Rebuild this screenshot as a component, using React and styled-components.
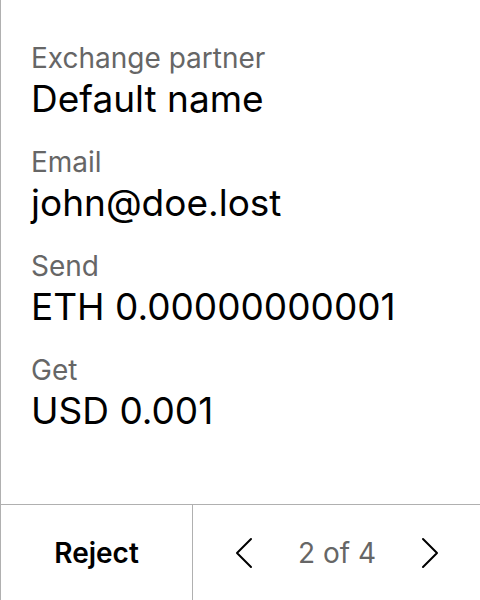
import React from "react";
import styled, { createGlobalStyle } from "styled-components";

const Global = createGlobalStyle`
  html, body { margin: 0; padding: 0; background: #fff; }
  body { font-family: Inter, "Noto Sans", sans-serif; }
  * { box-sizing: border-box; }
`;

const Screen = styled.div`
  width: 480px;
  height: 600px;
  display: flex;
  flex-direction: column;
  border-left: 1px solid #b0b0b0;
  background: #fff;
`;

const Details = styled.div`
  flex: 1;
  padding: 40px 30px 0 30px;
  display: flex;
  flex-direction: column;
  gap: 23px;
`;

const Field = styled.div`
  display: flex;
  flex-direction: column;
  gap: 1px;
`;

const Label = styled.div`
  font-size: 28px;
  line-height: 36px;
  color: #666;
`;

const Value = styled.div`
  font-size: 37px;
  line-height: 44px;
  color: #000;
`;

const Footer = styled.div`
  height: 96px;
  border-top: 1px solid #b0b0b0;
  display: grid;
  grid-template-columns: 192px 1fr;
`;

const RejectButton = styled.button`
  border: none;
  border-right: 1px solid #b0b0b0;
  background: none;
  font-family: inherit;
  font-size: 28px;
  font-weight: 600;
  color: #000;
  padding: 0;
`;

const Pager = styled.div`
  display: flex;
  align-items: center;
  justify-content: space-between;
  padding: 0 41px 0 42px;
`;

const Arrow = styled.button`
  border: none;
  background: none;
  padding: 0;
  width: 18px;
  height: 32px;
  display: flex;
  align-items: center;
  justify-content: center;
`;

const Count = styled.span`
  font-size: 28px;
  color: #666;
`;

const Chevron = ({ dir }) => (
  <svg width="18" height="32" viewBox="0 0 18 32">
    <path
      d={dir === "left" ? "M16 2 L2 16 L16 30" : "M2 2 L16 16 L2 30"}
      fill="none"
      stroke="#000"
      strokeWidth="2"
      strokeLinecap="round"
      strokeLinejoin="round"
    />
  </svg>
);

const fields = [
  ["Exchange partner", "Default name"],
  ["Email", "john@doe.lost"],
  ["Send", "ETH 0.00000000001"],
  ["Get", "USD 0.001"],
];

export default function App() {
  return (
    <>
      <Global />
      <Screen>
        <Details>
          {fields.map(([l, v]) => (
            <Field key={l}>
              <Label>{l}</Label>
              <Value>{v}</Value>
            </Field>
          ))}
        </Details>
        <Footer>
          <RejectButton>Reject</RejectButton>
          <Pager>
            <Arrow><Chevron dir="left" /></Arrow>
            <Count>2 of 4</Count>
            <Arrow><Chevron dir="right" /></Arrow>
          </Pager>
        </Footer>
      </Screen>
    </>
  );
}
